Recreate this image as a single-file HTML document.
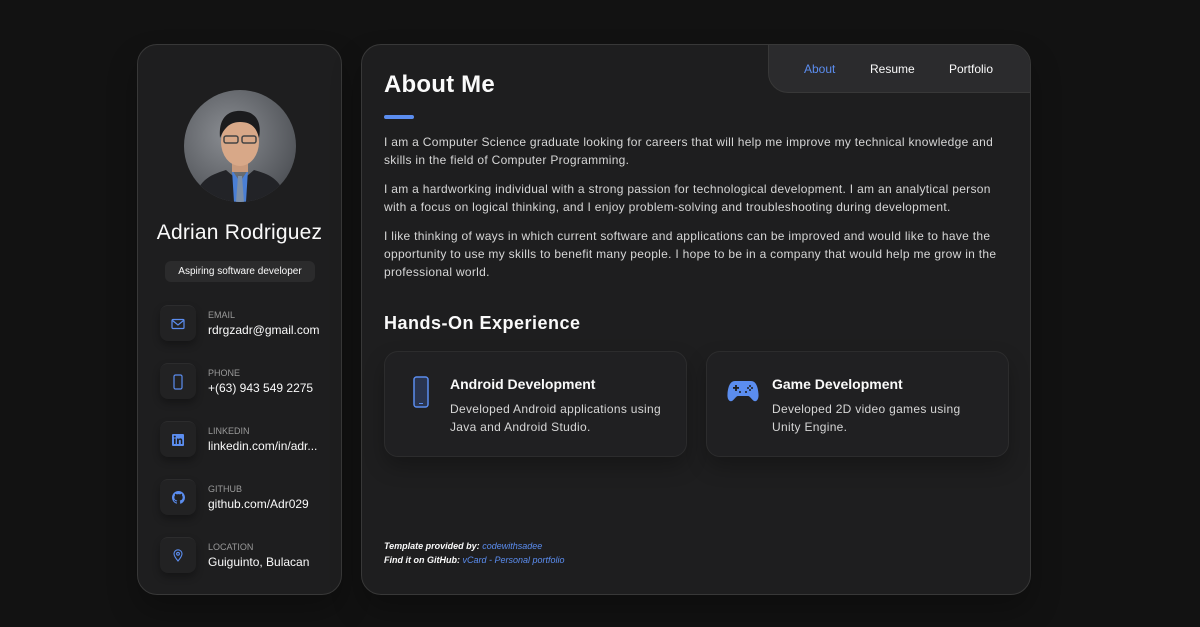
<!DOCTYPE html>
<html><head><meta charset="utf-8"><style>
*{margin:0;padding:0;box-sizing:border-box}
body{width:1200px;height:627px;background:#121212;font-family:"Liberation Sans",sans-serif;color:#d6d6d6;position:relative;overflow:hidden}
.card{position:absolute;background:#1e1e1f;border:1px solid #383838;border-radius:20px;box-shadow:0 16px 30px rgba(0,0,0,.25)}
#side{left:137px;top:44px;width:205px;height:551px}
#main{left:361px;top:44px;width:670px;height:551px;overflow:hidden}
.avatar{position:absolute;left:46px;top:45px;width:112px;height:112px;border-radius:50%;overflow:hidden;background:radial-gradient(circle at 40% 40%,#8a8d92,#55585d 70%,#3a3c40)}
.name{position:absolute;left:0;width:100%;top:176px;text-align:center;font-size:21px;color:#fafafa;font-weight:500;letter-spacing:.2px}
.tag{position:absolute;left:27px;top:216px;width:150px;height:21px;background:#2b2b2c;border-radius:6px;font-size:10px;color:#fafafa;text-align:center;line-height:21px}
.ci{position:absolute;left:22px;width:36px;height:36px;border-radius:8px;background:#222223;box-shadow:0 4px 8px rgba(0,0,0,.3);border-top:1px solid #2c2c2d;display:flex;align-items:center;justify-content:center}
.cl{position:absolute;left:70px;font-size:9px;color:#9a9a9a}
.cv{position:absolute;left:70px;font-size:12px;color:#fafafa;white-space:nowrap}
.nav{position:absolute;right:-1px;top:-1px;width:263px;height:49px;background:#2b2b2d;border:1px solid #383838;border-radius:0 20px 0 20px;font-size:12px;color:#fafafa;font-weight:500}
.nav span{position:absolute;top:17px}
h1{position:absolute;left:22px;top:26px;font-size:24px;color:#fafafa;font-weight:700;letter-spacing:.2px}
.bar{position:absolute;left:22px;top:70px;width:30px;height:4px;border-radius:3px;background:#5b8def}
p.t{position:absolute;left:22px;font-size:12px;line-height:18px;color:#d6d6d6;white-space:nowrap;letter-spacing:.3px}
h2{position:absolute;left:22px;top:268px;font-size:18px;color:#fafafa;font-weight:700;letter-spacing:.5px}
.svc{position:absolute;top:306px;width:303px;height:106px;background:#202022;border:1px solid #2c2c2d;border-radius:14px;box-shadow:0 10px 20px rgba(0,0,0,.25)}
.svc h3{position:absolute;left:65px;top:24px;font-size:14px;color:#fafafa;font-weight:700}
.svc div{position:absolute;left:65px;top:48px;font-size:12px;line-height:18px;color:#d6d6d6;white-space:nowrap;letter-spacing:.3px}
.foot{position:absolute;left:22px;font-size:9px;font-style:italic;color:#fafafa;font-weight:700}
.foot a{color:#5b8def;font-weight:400;text-decoration:none}
</style></head><body>
<div class="card" id="side">
 <div class="avatar">
  <svg width="112" height="112" viewBox="0 0 112 112">
   <path d="M10 112 C14 88 30 84 42 80 L56 92 L70 80 C84 84 98 88 102 112Z" fill="#222327"/>
   <path d="M48 80 L56 92 L64 80 L62 112 L50 112Z" fill="#4a7fd6"/>
   <path d="M54 86 L58 86 L60 112 L52 112Z" fill="#7c8fa8"/>
   <rect x="48" y="60" width="16" height="22" fill="#c99a7c"/>
   <ellipse cx="56" cy="52" rx="19" ry="24" fill="#d8a888"/>
   <path d="M36 48 C34 26 46 20 58 21 C72 22 78 32 75 48 C72 36 66 32 56 32 C46 32 40 38 36 48Z" fill="#1b1b1d"/>
   <rect x="40" y="46" width="14" height="7" rx="2" fill="none" stroke="#444" stroke-width="1.5"/>
   <rect x="58" y="46" width="14" height="7" rx="2" fill="none" stroke="#444" stroke-width="1.5"/>
  </svg>
 </div>
 <div class="name">Adrian Rodriguez</div>
 <div class="tag">Aspiring software developer</div>

 <div class="ci" style="top:260px"><svg width="14" height="12" viewBox="0 0 14 12"><rect x="1" y="1.5" width="12" height="9" rx="1" fill="none" stroke="#5b8def" stroke-width="1.2"/><path d="M1.5 2.5 L7 7 L12.5 2.5" fill="none" stroke="#5b8def" stroke-width="1.2"/></svg></div>
 <div class="cl" style="top:265px">EMAIL</div><div class="cv" style="top:278px">rdrgzadr@gmail.com</div>

 <div class="ci" style="top:318px"><svg width="10" height="16" viewBox="0 0 10 16"><rect x="1" y="1" width="8" height="14" rx="1.5" fill="none" stroke="#5b8def" stroke-width="1.2"/></svg></div>
 <div class="cl" style="top:323px">PHONE</div><div class="cv" style="top:336px">+(63) 943 549 2275</div>

 <div class="ci" style="top:376px"><svg width="12" height="12" viewBox="0 0 12 12"><rect width="12" height="12" rx="1" fill="#5b8def"/><rect x="2" y="4.5" width="1.6" height="5.5" fill="#1e1e1f"/><circle cx="2.8" cy="2.6" r="1" fill="#1e1e1f"/><path d="M5 4.5h1.5v1c.5-.8 1.2-1.1 2-1.1 1.2 0 1.8.8 1.8 2.2V10H8.8V7c0-.8-.3-1.2-.9-1.2-.7 0-1.100.5-1.100 1.300V10H5Z" fill="#1e1e1f"/></svg></div>
 <div class="cl" style="top:381px">LINKEDIN</div><div class="cv" style="top:394px">linkedin.com/in/adr...</div>

 <div class="ci" style="top:434px"><svg width="13" height="13" viewBox="0 0 16 16"><path fill="#5b8def" d="M8 0C3.58 0 0 3.580 0 8c0 3.540 2.290 6.530 5.470 7.590.4.070.550-.170.550-.380v-1.330c-2.230.480-2.700-1.070-2.700-1.070-.360-.920-.890-1.170-.890-1.170-.730-.500.060-.490.060-.490.800.060 1.230.830 1.230.830.710 1.220 1.870.870 2.330.660.070-.520.280-.870.500-1.070-1.780-.200-3.640-.890-3.640-3.950 0-.870.310-1.590.820-2.150-.080-.200-.360-1.020.080-2.120 0 0 .670-.210 2.200.820a7.600 7.600 0 0 1 4 0c1.530-1.040 2.200-.820 2.200-.820.440 1.100.160 1.920.080 2.120.510.560.820 1.270.820 2.150 0 3.070-1.870 3.750-3.650 3.950.290.250.540.730.540 1.480v2.200c0 .210.150.460.550.380A8.010 8.010 0 0 0 16 8c0-4.420-3.580-8-8-8z"/></svg></div>
 <div class="cl" style="top:439px">GITHUB</div><div class="cv" style="top:452px">github.com/Adr029</div>

 <div class="ci" style="top:492px"><svg width="10" height="13" viewBox="0 0 10 13"><path d="M5 12 C2 8.5 1 6.5 1 4.8 A4 4 0 0 1 9 4.8 C9 6.5 8 8.5 5 12Z" fill="none" stroke="#5b8def" stroke-width="1.1"/><circle cx="5" cy="4.8" r="1.4" fill="none" stroke="#5b8def" stroke-width="1.1"/></svg></div>
 <div class="cl" style="top:497px">LOCATION</div><div class="cv" style="top:510px">Guiguinto, Bulacan</div>
</div>

<div class="card" id="main">
 <div class="nav"><span style="left:35px;color:#5b8def">About</span><span style="left:101px">Resume</span><span style="left:180px">Portfolio</span></div>
 <h1>About Me</h1>
 <div class="bar"></div>
 <p class="t" style="top:88px">I am a Computer Science graduate looking for careers that will help me improve my technical knowledge and<br>skills in the field of Computer Programming.</p>
 <p class="t" style="top:135px">I am a hardworking individual with a strong passion for technological development. I am an analytical person<br>with a focus on logical thinking, and I enjoy problem-solving and troubleshooting during development.</p>
 <p class="t" style="top:182px">I like thinking of ways in which current software and applications can be improved and would like to have the<br>opportunity to use my skills to benefit many people. I hope to be in a company that would help me grow in the<br>professional world.</p>
 <h2>Hands-On Experience</h2>
 <div class="svc" style="left:22px">
  <svg style="position:absolute;left:27px;top:24px" width="18" height="32" viewBox="0 0 18 32"><rect x="2" y="1" width="14" height="30" rx="2.5" fill="#2a3550" stroke="#5b8def" stroke-width="1.5"/><rect x="7" y="27" width="4" height="1" fill="#5b8def"/></svg>
  <h3>Android Development</h3>
  <div>Developed Android applications using<br>Java and Android Studio.</div>
 </div>
 <div class="svc" style="left:344px">
  <svg style="position:absolute;left:20px;top:27px" width="32" height="24" viewBox="0 0 32 24"><path d="M8 2 H24 C29 2 31 8 31.5 15 C32 21 29 23 27 22 C25 21 23 17 21 17 H11 C9 17 7 21 5 22 C3 23 0 21 .5 15 C1 8 3 2 8 2Z" fill="#5b8def"/><rect x="6" y="8" width="6" height="1.8" fill="#1e1e1f"/><rect x="8.1" y="6" width="1.8" height="6" fill="#1e1e1f"/><circle cx="23" cy="7" r="1" fill="#1e1e1f"/><circle cx="23" cy="11" r="1" fill="#1e1e1f"/><circle cx="21" cy="9" r="1" fill="#1e1e1f"/><circle cx="25" cy="9" r="1" fill="#1e1e1f"/><circle cx="13" cy="13" r="1" fill="#1e1e1f"/><circle cx="19" cy="13" r="1" fill="#1e1e1f"/></svg>
  <h3>Game Development</h3>
  <div>Developed 2D video games using<br>Unity Engine.</div>
 </div>
 <div class="foot" style="top:496px">Template provided by: <a>codewithsadee</a></div>
 <div class="foot" style="top:510px">Find it on GitHub: <a>vCard - Personal portfolio</a></div>
</div>
</body></html>
